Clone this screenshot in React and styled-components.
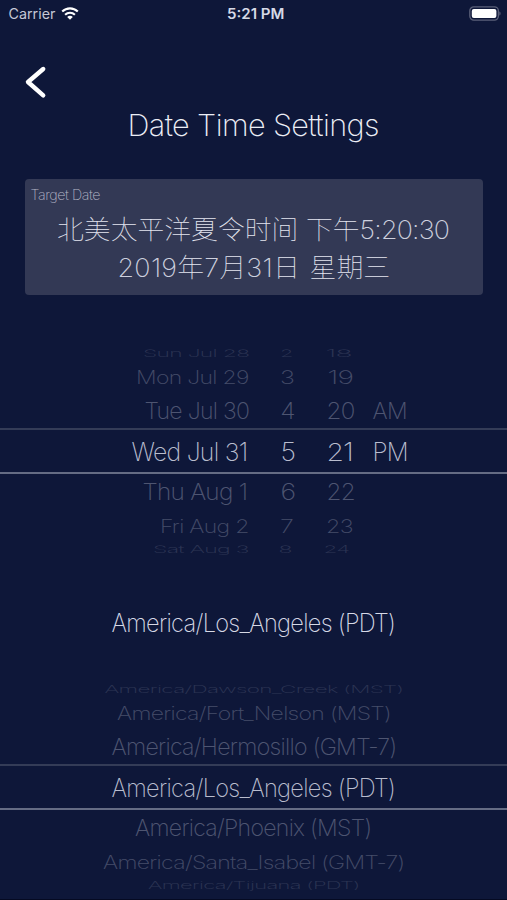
import React, { useLayoutEffect, useRef, useState } from 'react';
import styled, { createGlobalStyle } from 'styled-components';

const GlobalStyle = createGlobalStyle`
  * {
    box-sizing: border-box;
  }

  body {
    margin: 0;
    background-color: #0e1739;
    font-family: Inter, 'Noto Sans CJK SC', sans-serif;
    font-weight: 200;
    overflow: hidden;
  }
`;

const Screen = styled.div`
  display: flex;
  flex-direction: column;
  width: 507px;
  height: 900px;
  overflow: hidden;
  color: #d6d9e6;
  background-color: #0e1739;
  border-bottom: 1px solid #050a22;
`;

const StatusBar = styled.div`
  display: grid;
  grid-template-columns: 1fr auto 1fr;
  align-items: center;
  height: 27px;
  padding: 0 6px 0 8px;
  font-size: 14px;
  font-weight: 400;
`;

const Carrier = styled.div`
  display: flex;
  align-items: center;
  gap: 6px;
  color: #c5c8d6;
`;

const Clock = styled.div`
  font-weight: 600;
  padding-left: 3px;
`;

const Battery = styled.svg`
  justify-self: end;
`;

const BackButton = styled.button`
  display: flex;
  width: 24px;
  height: 36px;
  margin: 37px 0 0 24px;
  padding: 0;
  border: 0;
  background: none;
`;

const Title = styled.h1`
  display: flex;
  justify-content: center;
  height: 40px;
  margin: 5px 0 0;
  font-size: 30px;
  line-height: 40px;
  font-weight: 200;
  color: #eceef6;
`;

const TargetCard = styled.section`
  display: flex;
  flex-direction: column;
  align-items: center;
  height: 116px;
  margin: 34px 24px 0 25px;
  padding: 6px 6px 6px 5px;
  border-radius: 4px;
  background-color: #333955;
`;

const CardLabel = styled.div`
  align-self: flex-start;
  height: 20px;
  font-size: 14px;
  line-height: 20px;
  color: #b3b6c6;
`;

const CardLine = styled.div`
  height: 38px;
  margin-top: ${props => props.first ? 6 : 0}px;
  font-size: 26px;
  line-height: 38px;
  font-weight: 100;
  word-spacing: ${props => props.first ? 0 : 2}px;
  color: #e4e6f0;
`;

const Digits = styled.span`
  letter-spacing: ${props => props.tight ? -0.03 : 0.01}em;
  font-weight: 200;
  color: #cdd0de;
`;

const Zone = styled.div`
  display: flex;
  justify-content: center;
  margin-top: 48px;
  height: 36px;
  font-size: 25px;
  line-height: 36px;
`;

const Picker = styled.div`
  display: flex;
  flex-direction: column;
  flex-shrink: 0;
  margin-top: ${props => props.top}px;
`;

const PickerRow = styled.div`
  display: grid;
  grid-template-columns: ${props => props.columns};
  align-items: center;
  height: ${props => props.height}px;
  opacity: ${props => props.fade};
  font-size: 25px;
  line-height: 30px;
`;

const SelectedRow = styled(PickerRow)`
  height: 46px;
  margin: -1px 0;
  padding-top: 2px;
  border-top: 2px solid #343c57;
  border-bottom: 2px solid #656c84;
  opacity: 1;
  color: #b9bdce;
`;

const Cell = styled.div`
  display: flex;
  align-items: center;
  justify-content: ${props => props.align || 'flex-start'};
  height: 0;
  padding-left: ${props => props.shift || 0}px;
  padding-right: ${props => props.inset || 0}px;
`;

const FitBox = styled.span`
  display: flex;
  justify-content: center;
  flex-shrink: 0;
  width: ${props => props.width}px;
`;

const FitText = styled.span`
  flex-shrink: 0;
  white-space: nowrap;
  letter-spacing: ${props => props.tracking}em;
`;

// Squeezes or stretches one line of text so that it fills the given width
const Fit = ({width, squash = 1, tracking = -0.03, children}) => {
    const ref = useRef(null);
    const [scale, setScale] = useState(1);

    useLayoutEffect(() => {
        setScale(width / ref.current.offsetWidth);
    }, [width, children]);

    return (
        <FitBox width={width}>
            <FitText ref={ref} tracking={tracking} style={{transform: `scale(${scale}, ${squash})`}}>
                {children}
            </FitText>
        </FitBox>
    );
}

// the wheel gets flatter and darker towards its edges
const wheel = [
    {height: 16, squash: 0.4, fade: 0.15},
    {height: 32, squash: 0.73, fade: 0.27},
    {height: 36, squash: 0.93, fade: 0.32},
    {height: 44, squash: 1, fade: 1},
    {height: 38, squash: 0.93, fade: 0.32},
    {height: 30, squash: 0.73, fade: 0.27},
    {height: 16, squash: 0.4, fade: 0.15},
];

// each cell is [text, width, offset]
const dates = [
    {day: ['Sun Jul 28', 106, 0], hour: ['2', 13, 0], minute: ['18', 26, -1]},
    {day: ['Mon Jul 29', 113, 0], hour: ['3', 14, 0], minute: ['19', 26, 0]},
    {day: ['Tue Jul 30', 105, 0], hour: ['4', 15, 0], minute: ['20', 28, 0], half: ['AM', 34, 1]},
    {day: ['Wed Jul 31', 116, 2], hour: ['5', 15, 0], minute: ['21', 26, 0], half: ['PM', 35, 1]},
    {day: ['Thu Aug 1', 105, 2], hour: ['6', 15, 0], minute: ['22', 28, 0]},
    {day: ['Fri Aug 2', 89, 0], hour: ['7', 13, 0], minute: ['23', 27, -1]},
    {day: ['Sat Aug 3', 96, 0], hour: ['8', 13, -1], minute: ['24', 26, -4]},
];

const zones = [
    ['America/Dawson_Creek (MST)', 299],
    ['America/Fort_Nelson (MST)', 274],
    ['America/Hermosillo (GMT-7)', 285],
    ['America/Los_Angeles (PDT)', 284],
    ['America/Phoenix (MST)', 236],
    ['America/Santa_Isabel (GMT-7)', 302],
    ['America/Tijuana (PDT)', 212],
];

const WifiIcon = () => (
    <svg width="18" height="14" viewBox="0 0 18 14" fill="none" stroke="#fff" strokeWidth="2.1">
        <path d="M1.2 4.6C5.6 .3 12.4 .3 16.8 4.6" />
        <path d="M4.1 7.7C6.9 5 11.1 5 13.9 7.7" />
        <path d="M9 12.7L6.2 9.9C7.8 8.5 10.2 8.5 11.8 9.9Z" fill="#fff" stroke="none" />
    </svg>
);

const BatteryIcon = () => (
    <Battery width="32" height="16" viewBox="0 0 32 16">
        <rect x="0.8" y="0.9" width="28.6" height="13.2" rx="4" fill="none" stroke="#5b6079" strokeWidth="1.3" />
        <rect x="2.8" y="2.9" width="24.6" height="9.2" rx="2" fill="#fff" />
        <path d="M30.3 5.5C32 6 32 9 30.3 9.5Z" fill="#5b6079" />
    </Battery>
);

const App = () => {
    return (
        <>
            <GlobalStyle />
            <Screen>
                <StatusBar>
                    <Carrier>
                        <Fit width={47} tracking={0}>Carrier</Fit>
                        <WifiIcon />
                    </Carrier>
                    <Clock><Fit width={57} tracking={0}>5:21 PM</Fit></Clock>
                    <BatteryIcon />
                </StatusBar>

                <BackButton aria-label="Back">
                    <svg width="24" height="36" viewBox="0 0 24 36" fill="none" stroke="#fff" strokeWidth="4.4" strokeLinecap="round" strokeLinejoin="round">
                        <path d="M19.2 5L4 18L19.2 31.3" />
                    </svg>
                </BackButton>

                <Title><Fit width={251} tracking={-0.02}>Date Time Settings</Fit></Title>

                <TargetCard>
                    <CardLabel><Fit width={70}>Target Date</Fit></CardLabel>
                    <CardLine first>
                        <Fit width={392} tracking={0}>北美太平洋夏令时间 下午<Digits tight>5:20:30</Digits></Fit>
                    </CardLine>
                    <CardLine>
                        <Fit width={273} tracking={0}>
                            <Digits>2019</Digits>年<Digits>7</Digits>月<Digits>31</Digits>日 星期三
                        </Fit>
                    </CardLine>
                </TargetCard>

                <Picker top={50}>
                    {dates.map(({day, hour, minute, half}, i) => {
                        const Row = i === 3 ? SelectedRow : PickerRow;
                        const {height, squash, fade} = wheel[i];
                        return (
                            <Row key={day[0]} height={height} fade={fade} columns="249px 47px 45px 1fr">
                                <Cell align="flex-end" inset={day[2]}>
                                    <Fit width={day[1]} squash={squash}>{day[0]}</Fit>
                                </Cell>
                                <Cell shift={31 + hour[2]}>
                                    <Fit width={hour[1]} squash={squash}>{hour[0]}</Fit>
                                </Cell>
                                <Cell shift={31 + minute[2]}>
                                    <Fit width={minute[1]} squash={squash}>{minute[0]}</Fit>
                                </Cell>
                                <Cell shift={31 + (half ? half[2] : 0)}>
                                    {half && <Fit width={half[1]} squash={squash}>{half[0]}</Fit>}
                                </Cell>
                            </Row>
                        );
                    })}
                </Picker>

                <Zone><Fit width={284}>America/Los_Angeles (PDT)</Fit></Zone>

                <Picker top={40}>
                    {zones.map(([name, width], i) => {
                        const Row = i === 3 ? SelectedRow : PickerRow;
                        const {height, squash, fade} = wheel[i];
                        return (
                            <Row key={name} height={height} fade={fade} columns="1fr">
                                <Cell align="center">
                                    <Fit width={width} squash={squash}>{name}</Fit>
                                </Cell>
                            </Row>
                        );
                    })}
                </Picker>
            </Screen>
        </>
    );
}

export default App;
